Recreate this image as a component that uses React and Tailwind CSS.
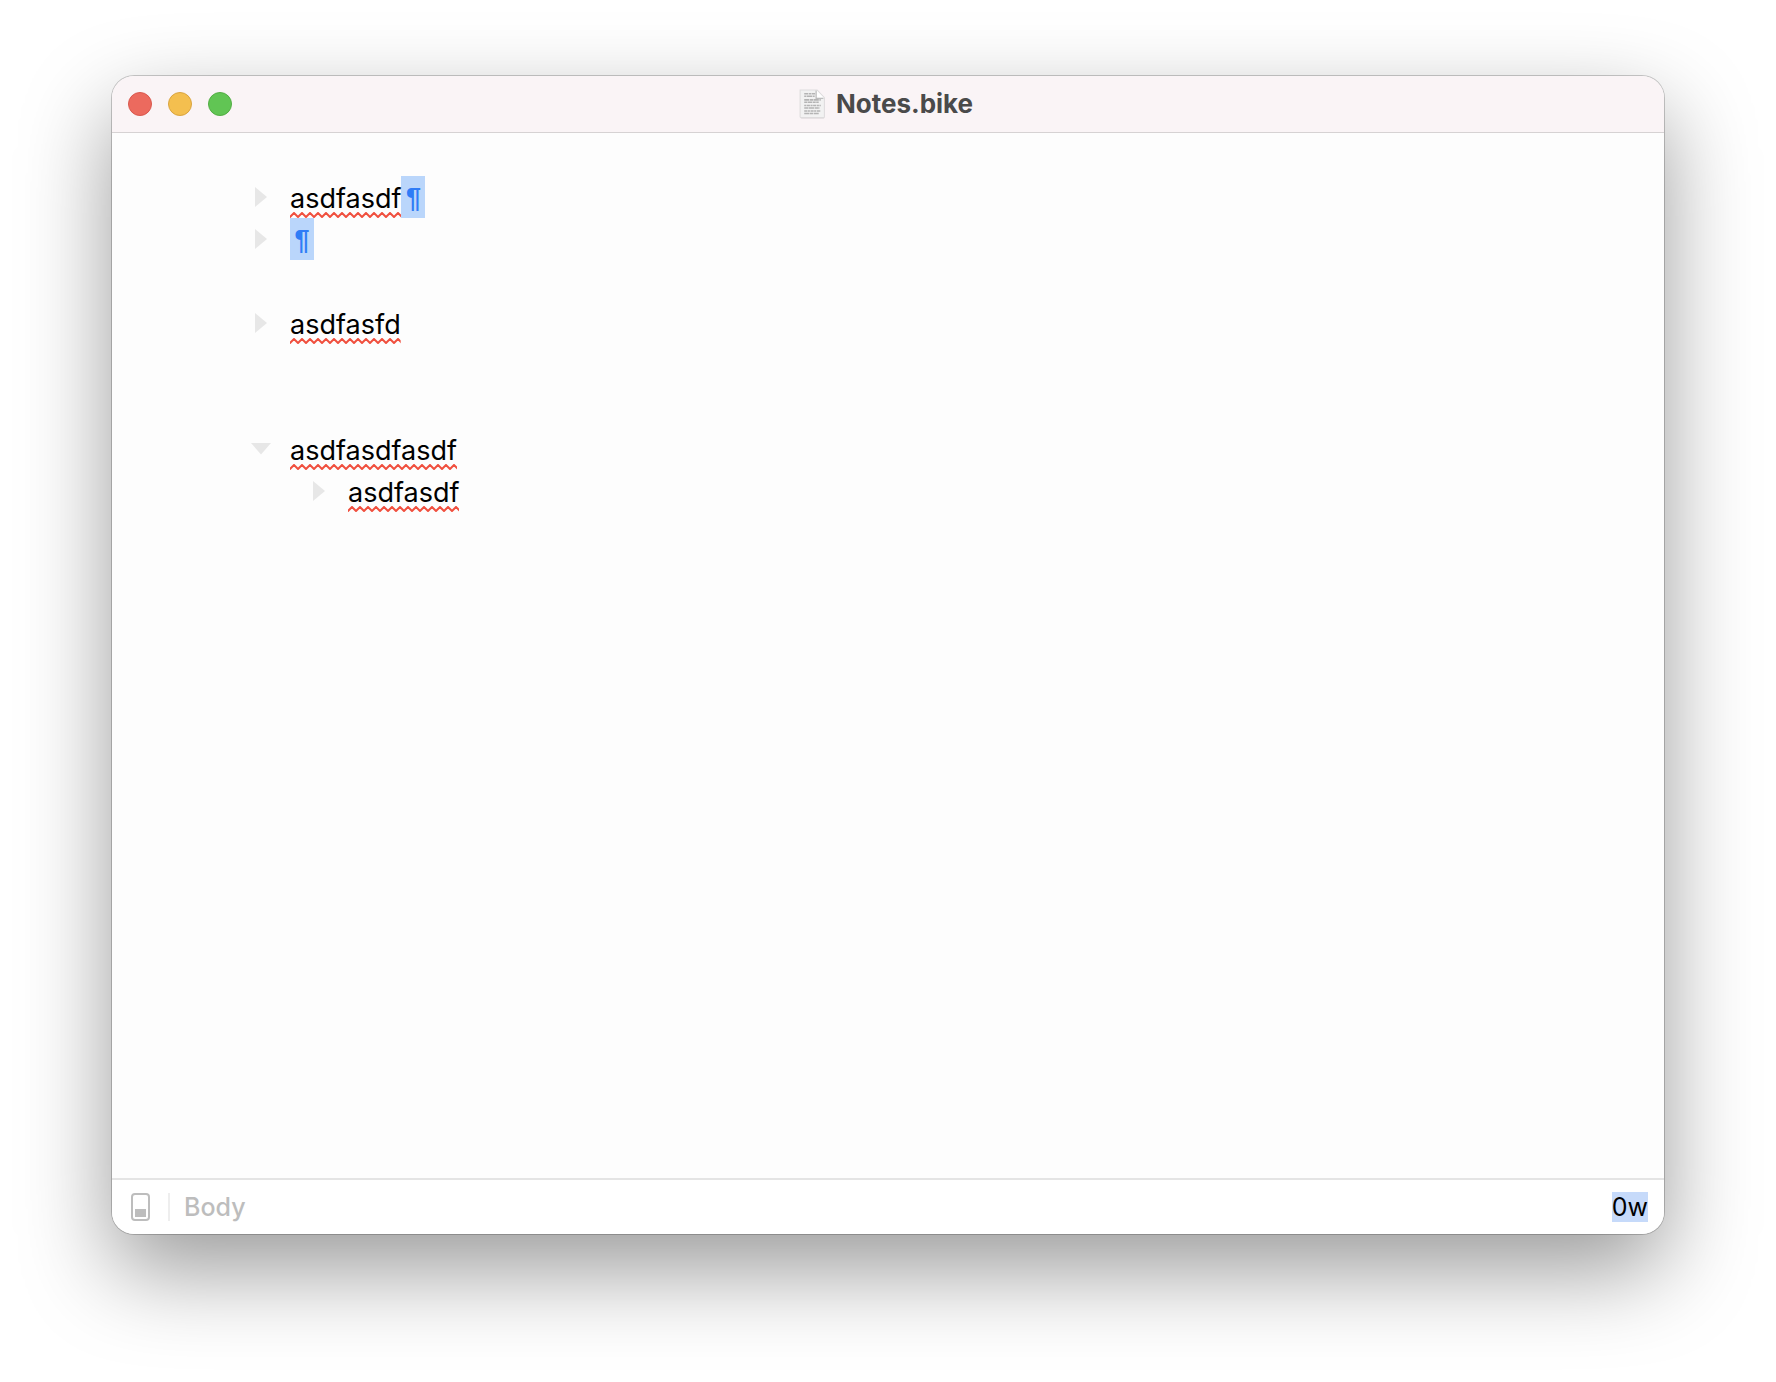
import React from "react";

const rows = [
  { text: "asdfasdf", marker: "closed", selected: true },
  { text: "", marker: "closed", selected: true },
  { text: "" },
  { text: "asdfasfd", marker: "closed" },
  { text: "" },
  { text: "" },
  { text: "asdfasdfasdf", marker: "open" },
  { text: "asdfasdf", marker: "closed", nested: true },
];

const TrafficLight = ({ label, color }) => (
  <button type="button" aria-label={label} className={`size-6 rounded-full border ${color}`} />
);

const DocumentIcon = () => (
  <svg width="27" height="30" viewBox="1 1 26 29" aria-hidden="true" className="shrink-0">
    <path d="M2.500 3h17l6 7v18.500a1 1 0 0 1-1 1h-21a1 1 0 0 1-1-1z" fill="#d3d0d1" />
    <path d="M2 2h16.500l7 7.500v18a1 1 0 0 1-1 1H3a1 1 0 0 1-1-1z" fill="#f2f2f2" stroke="#dedcdd" strokeWidth="1" />
    <path d="M18 2.500v7h7z" fill="#fff" />
    <path d="M17.500 2.500v7.500h7" fill="none" stroke="#bdbdbd" strokeWidth="1.200" />
    <g stroke="#b4b4b4" strokeWidth="1.500" fill="none">
      <path d="M6 5.500h10.500" strokeDasharray="4 .6 2 .5" />
      <path d="M6 8h10.500" strokeDasharray="2 .5 5 .6" />
      <path d="M6 11.500h16" strokeDasharray="5 .6 3 .5" />
      <path d="M6 13.800h14" strokeDasharray="3 .5 4 .6" />
      <path d="M6 17h16" strokeDasharray="2 .5 3 .6" />
      <path d="M6 19.300h15" strokeDasharray="4 .5 5 .6" />
      <path d="M6 22.300h16" strokeDasharray="3 .5 2 .6" />
      <path d="M6 24.600h14" strokeDasharray="5 .5 3 .6" />
    </g>
  </svg>
);

const Marker = ({ open }) => (
  <button
    type="button"
    aria-label={open ? "Collapse row" : "Expand row"}
    className="flex size-5 shrink-0 items-center justify-center"
  >
    <svg width="20" height="20" viewBox="0 0 20 20" fill="#e7e7e7" aria-hidden="true">
      {open ? <path d="M0 4h20L10 15.500z" /> : <path d="M4 0v20L16 10z" />}
    </svg>
  </button>
);

const Misspelled = ({ id, children }) => (
  <span className="relative h-[42px] leading-[46px]">
    {children}
    <svg className="absolute left-0 top-9 h-[6px] w-full" aria-hidden="true">
      <defs>
        <pattern id={id} width="8" height="6" patternUnits="userSpaceOnUse">
          <path d="M-1 6L0 5L4 1L8 5L9 6" fill="none" stroke="#f0503f" strokeWidth="2" />
        </pattern>
      </defs>
      <rect width="100%" height="6" fill={`url(#${id})`} />
    </svg>
  </span>
);

const Row = ({ row, id }) => (
  <li className={`flex h-[42px] items-center text-[27px] ${row.nested ? "pl-[58px]" : ""}`}>
    <span className="flex w-[39px] shrink-0">{row.marker && <Marker open={row.marker === "open"} />}</span>
    {row.text && <Misspelled id={id}>{row.text}</Misspelled>}
    {row.selected && (
      <span className="h-[42px] w-6 bg-[#bad6fb] text-center font-['Liberation_Sans',sans-serif] leading-[44px] font-bold text-[#2f7cf6]">
        ¶
      </span>
    )}
  </li>
);

const App = () => {
  return (
    <div className="flex min-h-screen flex-col bg-white px-28 pt-[76px] pb-[148px] font-['Inter',sans-serif] text-black">
      <div className="flex flex-1 flex-col overflow-hidden rounded-[22px] bg-[#fdfdfd] shadow-[0_0_0_1px_rgba(0,0,0,0.2),0_36px_90px_rgba(0,0,0,0.4)]">
        {/* Title bar */}
        <header className="grid h-[57px] grid-cols-[1fr_auto_1fr] items-center border-b border-[#d6d2d3] bg-[#faf4f6] px-4">
          <div className="flex gap-4">
            <TrafficLight label="Close" color="border-[#d9584e] bg-[#ec6a5e]" />
            <TrafficLight label="Minimize" color="border-[#d9a440] bg-[#f4bf4f]" />
            <TrafficLight label="Zoom" color="border-[#52ad44] bg-[#61c554]" />
          </div>
          <div className="flex items-center gap-[10px] pr-1">
            <DocumentIcon />
            <h1 className="text-[26px] leading-8 font-bold text-[#4a4a4a]">Notes.bike</h1>
          </div>
        </header>

        {/* Outline */}
        <main className="flex-1 pt-[43px] pl-[139px]">
          <ul>
            {rows.map((row, i) => (
              <Row key={i} row={row} id={`squiggle-${i}`} />
            ))}
          </ul>
        </main>

        {/* Status bar */}
        <footer className="flex h-14 items-center border-t-2 border-[#e4e4e4] bg-white pr-4 pl-[18px] text-[25px] leading-8">
          <button type="button" aria-label="Toggle status details">
            <svg width="20" height="28" viewBox="0 0 20 28" aria-hidden="true">
              <rect x="2" y="1" width="17" height="26" rx="3" fill="none" stroke="#bdbdbd" strokeWidth="2" />
              <rect x="5" y="16" width="11" height="8" fill="#bdbdbd" />
            </svg>
          </button>
          <span className="ml-[18px] h-7 w-[2px] bg-[#eeeeee]" />
          <button type="button" className="ml-[14px] font-medium text-[#bdbdbd]">
            Body
          </button>
          <span className="ml-auto bg-[#c6dafa] leading-[30px]">0w</span>
        </footer>
      </div>
    </div>
  );
};

export default App;
